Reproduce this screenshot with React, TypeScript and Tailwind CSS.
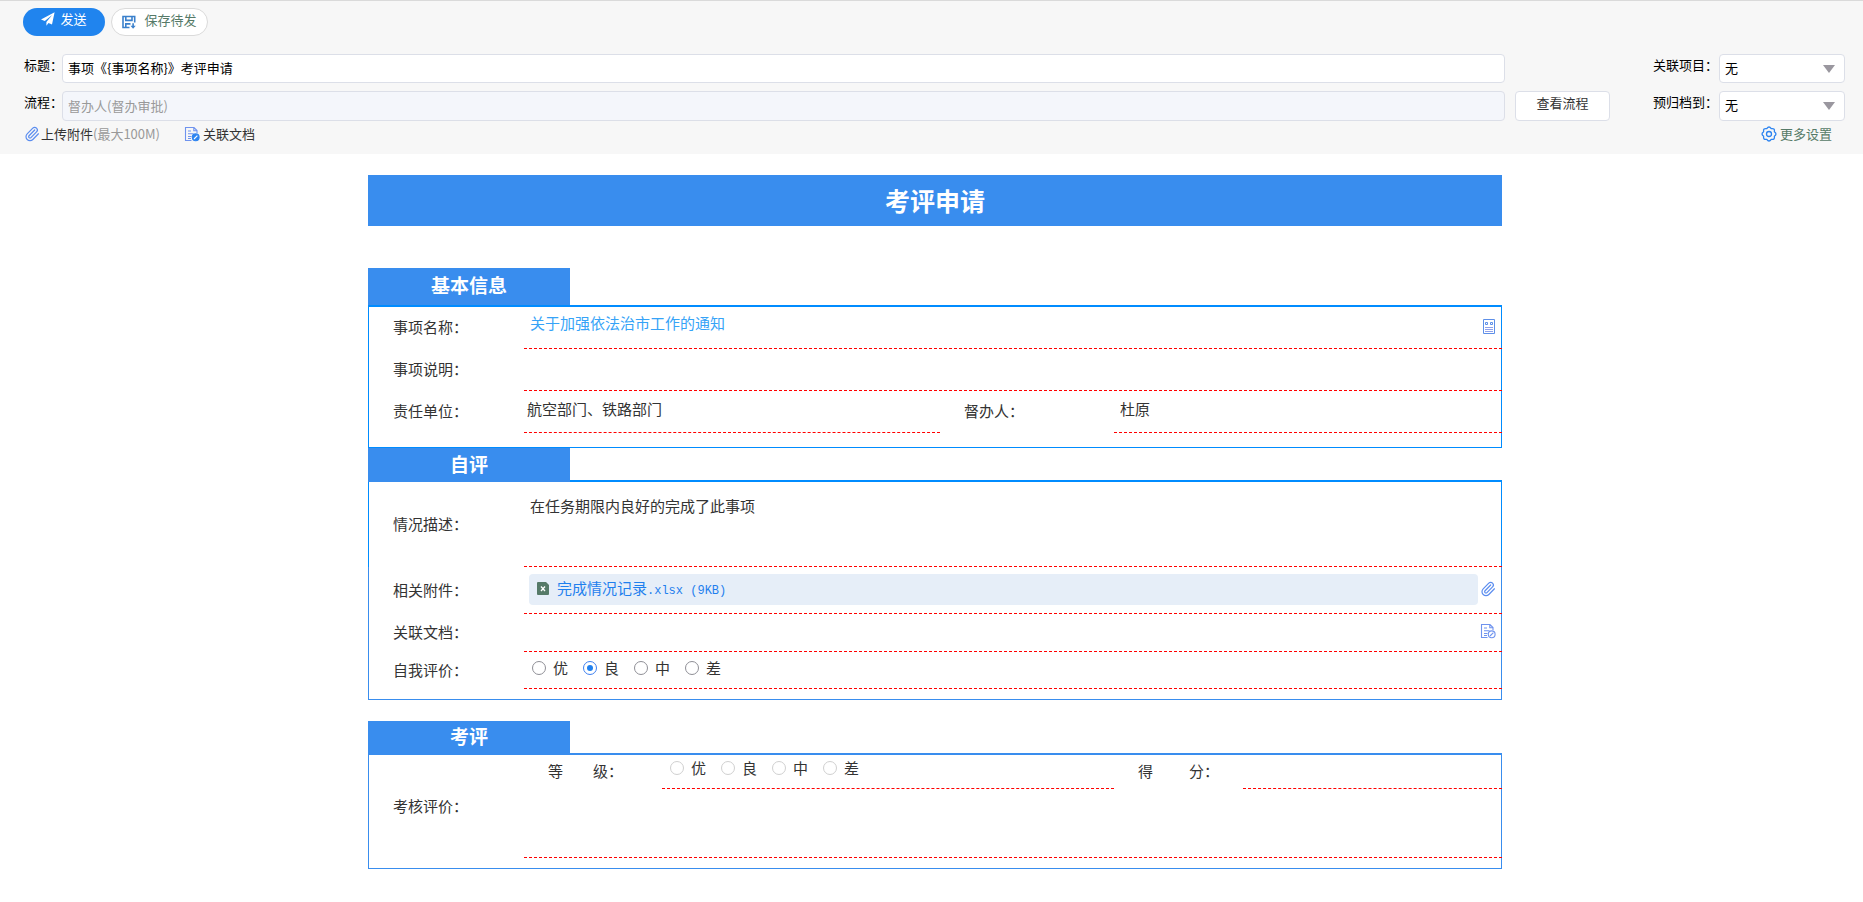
import { ReactNode, useState } from 'react';
import { Paperclip } from 'lucide-react';

const GRADES = ['优', '良', '中', '差'];

function PlaneIcon() {
  return (
    <svg viewBox="0 0 14 14" className="h-[14px] w-[14px]" fill="currentColor" aria-hidden="true">
      <path d="M13.6.3 0 7.4l3.8 1.7L11.2 3 5.4 9.9v3.8l2.100-2.700 3.500 1.400z" />
    </svg>
  );
}

function SaveIcon() {
  return (
    <svg viewBox="0 0 14 14" className="mt-1 h-[14px] w-[14px]" fill="none" stroke="#3a80cc" strokeWidth="1.6" aria-hidden="true">
      <path d="M12.700 7.500V1.500H1v11h6.500" />
      <path d="M3.800 1.500v3.900h6.200V1.500M3.800 12.500V8.900h4.700" />
      <path d="M11.100 8.300v3" />
      <path d="M8.500 10.700h5.200L11.100 13.800z" fill="#3a80cc" stroke="none" />
    </svg>
  );
}

function ClipIcon() {
  return <Paperclip className="size-4 shrink-0" color="#5b8def" strokeWidth={1.8} aria-hidden="true" />;
}

function DocIcon({ solid = false }: { solid?: boolean }) {
  return (
    <svg viewBox="0 0 16 16" className="h-4 w-4 shrink-0" fill="none" stroke="#6f93ee" strokeWidth="1.1" aria-hidden="true">
      <path d="M7.500 14.500H1.500V1.500H10l3 3V7M9.800 1.500v3.200H13M4 5h3M4 7.800h5.500M4 10.500h3.500M4 12.500h3" />
      <circle cx="11.700" cy="11.300" r="3.400" fill={solid ? '#2d84f0' : 'none'} stroke={solid ? '#2d84f0' : '#6f93ee'} />
      <path d="m10 13 3.400-3.400" stroke={solid ? '#fff' : '#6f93ee'} />
    </svg>
  );
}

function SheetIcon() {
  return (
    <svg viewBox="0 0 14 16" className="h-4 w-[14px]" fill="none" stroke="#5d8fe8" aria-hidden="true">
      <path d="M1.500.5h11v14h-11z" />
      <path d="M3.500 3.500h2v2h-2zM8.500 3.500h2v2h-2z" />
      <path d="M3 8.500h8M3 10.500h8M3 12.500h8" stroke="#8fa0ec" />
    </svg>
  );
}

function GearIcon() {
  return (
    <svg viewBox="0 0 16 16" className="size-4" fill="none" stroke="#2d84f0" strokeWidth="1.3" strokeLinejoin="round" aria-hidden="true">
      <path d="M13.360 5.780Q16.600 8 13.360 10.220Q14.080 14.080 10.220 13.360Q8 16.600 5.780 13.360Q1.920 14.080 2.640 10.220Q-.6 8 2.640 5.780Q1.920 1.920 5.780 2.640Q8-.6 10.220 2.640Q14.080 1.920 13.360 5.780z" />
      <circle cx="8" cy="8" r="2.500" />
    </svg>
  );
}

function ExcelIcon() {
  return (
    <svg viewBox="0 0 12 13" className="h-[13px] w-3 shrink-0" aria-hidden="true">
      <path d="M1 0h8l3 3v9a1 1 0 0 1-1 1H1a1 1 0 0 1-1-1V1a1 1 0 0 1 1-1z" fill="#567a68" />
      <path d="m4 4.500 4 4.500M8 4.500 4 9" stroke="#fff" strokeWidth="1.300" />
    </svg>
  );
}

function SelectBox({ id }: { id: string }) {
  return (
    <div className="relative">
      <select id={id} className="h-full w-full appearance-none rounded-sm border border-[#dcdfe8] bg-white pb-[2px] pl-[5px] text-black">
        <option>无</option>
      </select>
      <svg viewBox="0 0 12 8" className="pointer-events-none absolute top-1/2 right-[10px] h-2 w-3 -translate-y-1/2" aria-hidden="true">
        <path d="M0 0h12L6 8z" fill="#9a979f" />
      </svg>
    </div>
  );
}

function Tab({ children, className }: { children: ReactNode; className: string }) {
  return (
    <h2 className={`flex w-[202px] items-center justify-center bg-[#398dee] pb-[3px] text-[19px] font-bold text-white ${className}`}>
      {children}
    </h2>
  );
}

function Field({ children, className = '' }: { children?: ReactNode; className?: string }) {
  return <div className={`flex items-start border-b border-dashed border-[#ff0000] ${className}`}>{children}</div>;
}

function RowLabel({ children, htmlFor, id }: { children: ReactNode; htmlFor?: string; id?: string }) {
  return (
    <label htmlFor={htmlFor} id={id} className="flex items-center pb-[2px] pl-6 whitespace-pre">
      {children}
    </label>
  );
}

function Grades({ name, labelledBy, value, disabled, onChange }: {
  name: string;
  labelledBy: string;
  value?: string;
  disabled?: boolean;
  onChange?: (v: string) => void;
}) {
  return (
    <div role="radiogroup" aria-labelledby={labelledBy} className="flex gap-[15px]">
      {GRADES.map((g) => (
        <label key={g} className="flex items-center gap-[7px]">
          <input
            type="radio"
            name={name}
            value={g}
            checked={value === g}
            disabled={disabled}
            onChange={() => onChange?.(g)}
            className="size-[14px] appearance-none rounded-full border border-[#8f8f96] bg-clip-content p-[3px] checked:border-[#3d7ff0] checked:bg-[#1f80ee] disabled:border-[#d0d0d0]"
          />
          {g}
        </label>
      ))}
    </div>
  );
}

export default function App() {
  const [title, setTitle] = useState('事项《{事项名称}》考评申请');
  const [grade, setGrade] = useState('良');

  return (
    <div className="min-h-screen bg-white font-['Noto_Sans_CJK_SC',sans-serif] text-[15px] leading-5 text-[#333]">
      <header className="border-t border-[#dadada] bg-[#f7f7f7] pt-[7px] pr-[18px] pb-[10px] pl-6 text-[13px] text-black">
        <div className="mb-[18px] flex h-7 gap-[6px]">
          <button type="button" className="-ml-px flex w-[82px] items-center justify-center gap-[5px] rounded-full bg-[#2084ee] pb-[6px] text-white">
            <PlaneIcon />
            发送
          </button>
          <button type="button" className="flex w-[97px] items-center justify-center gap-2 rounded-full border border-[#dadada] bg-white pb-[5px] text-[#567a68]">
            <SaveIcon />
            保存待发
          </button>
        </div>

        <div className="grid grid-cols-[38px_1fr_105px_109px_126px] grid-rows-[29px_30px] gap-y-2">
          <label htmlFor="title" className="pt-px whitespace-nowrap">标题：</label>
          <input
            id="title"
            value={title}
            onChange={(e) => setTitle(e.target.value)}
            className="w-full rounded-sm border border-[#dcdfe8] bg-white px-[5px] pb-[2px]"
          />
          <span />
          <label htmlFor="project" className="pt-px pl-[43px] whitespace-nowrap">关联项目：</label>
          <SelectBox id="project" />

          <label htmlFor="flow" className="pt-px whitespace-nowrap">流程：</label>
          <input
            id="flow"
            readOnly
            value="督办人(督办审批)"
            className="w-full rounded-sm border border-[#dcdfe8] bg-[#f4f6fb] px-[5px] text-[#999]"
          />
          <button type="button" className="ml-[10px] rounded-sm border border-[#dcdfe8] bg-white pb-[6px] text-[#333]">
            查看流程
          </button>
          <label htmlFor="archive" className="pt-px pl-[43px] whitespace-nowrap">预归档到：</label>
          <SelectBox id="archive" />
        </div>

        <div className="flex items-center pt-[3px] text-[#333]">
          <button type="button" className="flex items-center gap-px">
            <ClipIcon />
            <span>上传附件<span className="text-[#999]">(最大100M)</span></span>
          </button>
          <button type="button" className="ml-6 flex items-center gap-[3px]">
            <DocIcon solid />
            关联文档
          </button>
          <button type="button" className="mr-[13px] ml-auto flex items-center gap-[3px] text-[#567a68]">
            <GearIcon />
            更多设置
          </button>
        </div>
      </header>

      <main className="px-2 pt-[21px] pl-[15px]">
        <div className="mx-auto max-w-[1134px]">
          <h1 className="flex h-[51px] items-center justify-center bg-[#398dee] pb-[2px] text-[25px] font-bold text-white">考评申请</h1>

          <section className="mt-[42px]">
            <Tab className="h-[37px]">基本信息</Tab>
            <div className="border border-t-2 border-[#008cff] pb-[14px]">
              <div className="grid min-h-[42px] grid-cols-[155px_1fr]">
                <RowLabel>事项名称：</RowLabel>
                <Field className="-mr-px justify-between pt-[6px] pr-[6px] pl-[6px]">
                  <a href="#matter" className="text-[#36a3f7]">关于加强依法治市工作的通知</a>
                  <button type="button" aria-label="选择事项" className="pt-[6px]"><SheetIcon /></button>
                </Field>
              </div>
              <div className="grid min-h-[42px] grid-cols-[155px_1fr]">
                <RowLabel htmlFor="note">事项说明：</RowLabel>
                <Field className="-mr-px pt-2 pl-[3px]">
                  <input id="note" className="h-5 w-full" />
                </Field>
              </div>
              <div className="grid min-h-[42px] grid-cols-[155px_416fr_174px_387fr]">
                <RowLabel htmlFor="unit">责任单位：</RowLabel>
                <Field className="pt-2 pl-[3px]">
                  <input id="unit" defaultValue="航空部门、铁路部门" className="h-5 w-full" />
                </Field>
                <RowLabel htmlFor="supervisor">督办人：</RowLabel>
                <Field className="-mr-px pt-2 pl-[6px]">
                  <input id="supervisor" defaultValue="杜原" className="h-5 w-full" />
                </Field>
              </div>
            </div>
          </section>

          <section>
            <Tab className="relative z-10 -mb-[2px] h-[34px]">自评</Tab>
            <div className="border-x border-t-2 border-[#008cff]">
              <div className="grid min-h-[85px] grid-cols-[155px_1fr]">
                <RowLabel htmlFor="description">情况描述：</RowLabel>
                <Field className="-mr-px pt-[14px] pl-[6px]">
                  <textarea id="description" defaultValue="在任务期限内良好的完成了此事项" className="h-[60px] w-full resize-none" />
                </Field>
              </div>
            </div>
            <div className="border border-t-0 border-[#398dee] pb-[10px]">
              <div className="grid min-h-[47px] grid-cols-[155px_1fr]">
                <RowLabel>相关附件：</RowLabel>
                <Field className="-mr-px gap-[2px] pt-[7px] pr-[6px] pl-[5px]">
                  <div className="flex h-[31px] flex-1 items-center gap-2 rounded bg-[#e6eef8] px-2 pb-[2px]">
                    <ExcelIcon />
                    <a href="#file" className="text-[#1f80ee]">
                      完成情况记录<span className="font-['Liberation_Mono',monospace] text-xs">.xlsx (9KB)</span>
                    </a>
                  </div>
                  <button type="button" aria-label="上传附件" className="self-start pt-[7px]"><ClipIcon /></button>
                </Field>
              </div>
              <div className="grid min-h-[38px] grid-cols-[155px_1fr]">
                <RowLabel>关联文档：</RowLabel>
                <Field className="-mr-px justify-end pt-[9px] pr-[6px]">
                  <button type="button" aria-label="关联文档"><DocIcon /></button>
                </Field>
              </div>
              <div className="grid min-h-[37px] grid-cols-[155px_1fr]">
                <RowLabel id="self-grade">自我评价：</RowLabel>
                <Field className="-mr-px pt-[6px] pl-2">
                  <Grades name="self" labelledBy="self-grade" value={grade} onChange={setGrade} />
                </Field>
              </div>
            </div>
          </section>

          <section className="mt-[21px]">
            <Tab className="h-8">考评</Tab>
            <div className="grid grid-cols-[155px_1fr] border border-t-2 border-[#398dee] pb-[10px]">
              <RowLabel htmlFor="review">考核评价：</RowLabel>
              <div>
                <div className="grid min-h-[34px] grid-cols-[138px_452fr_129px_258fr]">
                  <RowLabel id="final-grade">{'等\u3000\u3000级：'}</RowLabel>
                  <Field className="pt-[3px] pl-2">
                    <Grades name="final" labelledBy="final-grade" disabled />
                  </Field>
                  <RowLabel htmlFor="score"><span className="mr-9">得</span>分：</RowLabel>
                  <Field className="-mr-px pt-[3px] pl-[6px]">
                    <input id="score" disabled className="h-5 w-full" />
                  </Field>
                </div>
                <Field className="-mr-px min-h-[69px] pt-[3px] pl-[6px]">
                  <textarea id="review" disabled className="h-[60px] w-full resize-none" />
                </Field>
              </div>
            </div>
          </section>
        </div>
      </main>
    </div>
  );
}
